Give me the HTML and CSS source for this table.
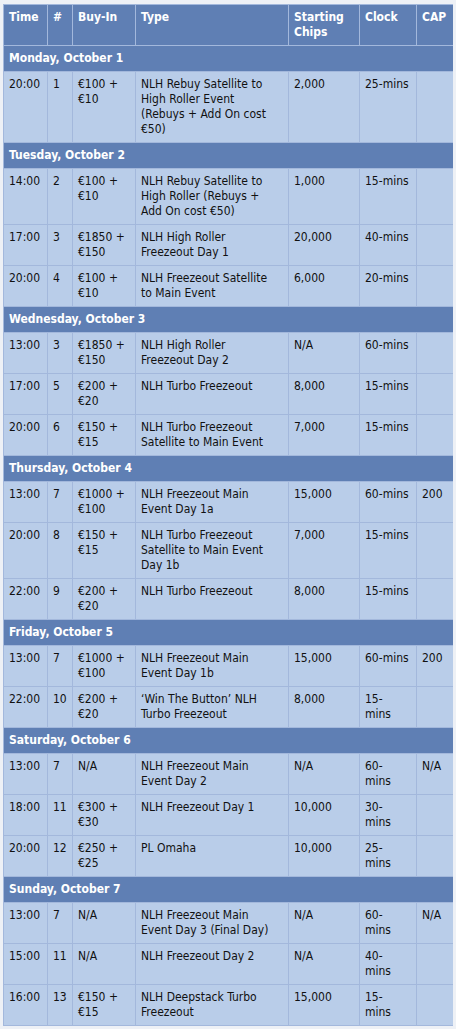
FILE: index.html
```html
<!DOCTYPE html>
<html>
<head>
<meta charset="utf-8">
<link rel="stylesheet" href="styles.css">
</head>
<body>
<table class="schedule">
  <colgroup>
    <col class="c-time"><col class="c-num"><col class="c-buy"><col class="c-type"><col class="c-chips"><col class="c-clock"><col class="c-cap">
  </colgroup>
  <thead>
    <tr class="head"><th>Time</th><th>#</th><th>Buy-In</th><th>Type</th><th>Starting<br>Chips</th><th>Clock</th><th>CAP</th></tr>
  </thead>
  <tbody>
    <tr class="day"><td colspan="7">Monday, October 1</td></tr>
    <tr><td>20:00</td><td>1</td><td>€100 +<br>€10</td><td>NLH Rebuy Satellite to<br>High Roller Event<br>(Rebuys + Add On cost<br>€50)</td><td>2,000</td><td>25-mins</td><td></td></tr>

    <tr class="day"><td colspan="7">Tuesday, October 2</td></tr>
    <tr><td>14:00</td><td>2</td><td>€100 +<br>€10</td><td>NLH Rebuy Satellite to<br>High Roller (Rebuys +<br>Add On cost €50)</td><td>1,000</td><td>15-mins</td><td></td></tr>
    <tr><td>17:00</td><td>3</td><td>€1850 +<br>€150</td><td>NLH High Roller<br>Freezeout Day 1</td><td>20,000</td><td>40-mins</td><td></td></tr>
    <tr><td>20:00</td><td>4</td><td>€100 +<br>€10</td><td>NLH Freezeout Satellite<br>to Main Event</td><td>6,000</td><td>20-mins</td><td></td></tr>

    <tr class="day"><td colspan="7">Wednesday, October 3</td></tr>
    <tr><td>13:00</td><td>3</td><td>€1850 +<br>€150</td><td>NLH High Roller<br>Freezeout Day 2</td><td>N/A</td><td>60-mins</td><td></td></tr>
    <tr><td>17:00</td><td>5</td><td>€200 +<br>€20</td><td>NLH Turbo Freezeout</td><td>8,000</td><td>15-mins</td><td></td></tr>
    <tr><td>20:00</td><td>6</td><td>€150 +<br>€15</td><td>NLH Turbo Freezeout<br>Satellite to Main Event</td><td>7,000</td><td>15-mins</td><td></td></tr>

    <tr class="day"><td colspan="7">Thursday, October 4</td></tr>
    <tr><td>13:00</td><td>7</td><td>€1000 +<br>€100</td><td>NLH Freezeout Main<br>Event Day 1a</td><td>15,000</td><td>60-mins</td><td>200</td></tr>
    <tr><td>20:00</td><td>8</td><td>€150 +<br>€15</td><td>NLH Turbo Freezeout<br>Satellite to Main Event<br>Day 1b</td><td>7,000</td><td>15-mins</td><td></td></tr>
    <tr><td>22:00</td><td>9</td><td>€200 +<br>€20</td><td>NLH Turbo Freezeout</td><td>8,000</td><td>15-mins</td><td></td></tr>

    <tr class="day"><td colspan="7">Friday, October 5</td></tr>
    <tr><td>13:00</td><td>7</td><td>€1000 +<br>€100</td><td>NLH Freezeout Main<br>Event Day 1b</td><td>15,000</td><td>60-mins</td><td>200</td></tr>
    <tr><td>22:00</td><td>10</td><td>€200 +<br>€20</td><td>‘Win The Button’ NLH<br>Turbo Freezeout</td><td>8,000</td><td>15-<br>mins</td><td></td></tr>

    <tr class="day"><td colspan="7">Saturday, October 6</td></tr>
    <tr><td>13:00</td><td>7</td><td>N/A</td><td>NLH Freezeout Main<br>Event Day 2</td><td>N/A</td><td>60-<br>mins</td><td>N/A</td></tr>
    <tr><td>18:00</td><td>11</td><td>€300 +<br>€30</td><td>NLH Freezeout Day 1</td><td>10,000</td><td>30-<br>mins</td><td></td></tr>
    <tr><td>20:00</td><td>12</td><td>€250 +<br>€25</td><td>PL Omaha</td><td>10,000</td><td>25-<br>mins</td><td></td></tr>

    <tr class="day"><td colspan="7">Sunday, October 7</td></tr>
    <tr><td>13:00</td><td>7</td><td>N/A</td><td>NLH Freezeout Main<br>Event Day 3 (Final Day)</td><td>N/A</td><td>60-<br>mins</td><td>N/A</td></tr>
    <tr><td>15:00</td><td>11</td><td>N/A</td><td>NLH Freezeout Day 2</td><td>N/A</td><td>40-<br>mins</td><td></td></tr>
    <tr><td>16:00</td><td>13</td><td>€150 +<br>€15</td><td>NLH Deepstack Turbo<br>Freezeout</td><td>15,000</td><td>15-<br>mins</td><td></td></tr>
  </tbody>
</table>
</body>
</html>
```

FILE: styles.css
```css
html, body {
  background: #eef1f6;
}
body {
  margin: 4px 3px;
  font-family: "DejaVu Sans", Verdana, sans-serif;
  font-stretch: condensed;
  font-size: 12px;
  line-height: 15px;
  color: #111;
}
.schedule {
  border-collapse: collapse;
  table-layout: fixed;
  width: 450px;
}
.c-time { width: 44px; }
.c-num { width: 25px; }
.c-buy { width: 63px; }
.c-type { width: 153px; }
.c-chips { width: 71px; }
.c-clock { width: 57px; }
.c-cap { width: 37px; }
.schedule th,
.schedule td {
  border: 1px solid #a3b8dc;
  padding: 5px 5px 5px 5px;
  vertical-align: top;
  text-align: left;
  white-space: nowrap;
  overflow: hidden;
  background: #b9cde9;
}
.schedule th {
  background: #5f7fb4;
  color: #fff;
  font-weight: bold;
}
.schedule .day td {
  background: #5f7fb4;
  color: #fff;
  font-weight: bold;
}
```
